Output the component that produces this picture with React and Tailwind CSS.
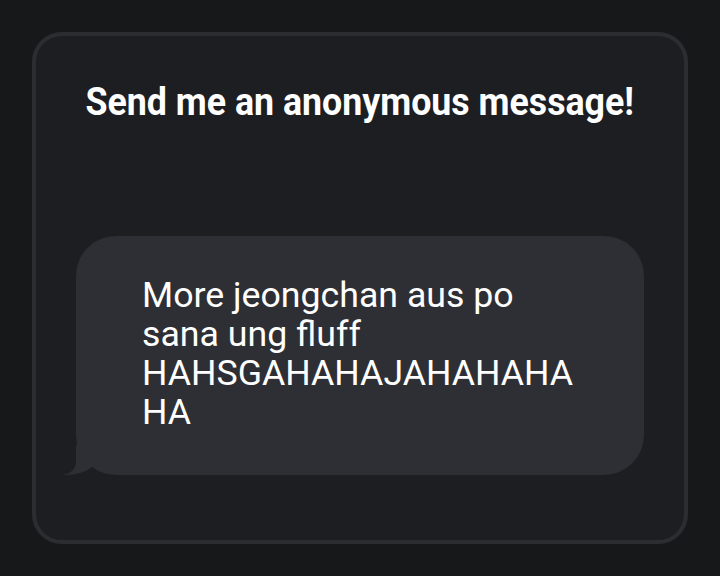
export default function App() {
  return (
    <div
      className="w-[720px] h-[576px] bg-[#17181a] p-8"
      style={{ fontFamily: 'Roboto, "Noto Sans", sans-serif' }}
    >
      <div className="h-full rounded-[30px] border-4 border-[#2c2d31] bg-[#1d1e22] flex flex-col items-center pt-[44px]">
        <h1 className="text-[38px] leading-[44px] font-bold text-white whitespace-nowrap scale-x-[0.94] origin-center">
          Send me an anonymous message!
        </h1>

        <div className="relative mt-[112px] w-[568px] rounded-[40px] bg-[#2e2f34] pl-[66px] pt-[40px] pb-[43px]">
          <p className="w-[442px] text-[35.7px] leading-[39px] text-white break-words">
            More jeongchan aus po sana ung fluff HAHSGAHAHAJAHAHAHAHA
          </p>
          <svg
            className="absolute left-[-14px] bottom-0"
            width="40"
            height="30"
            viewBox="0 0 40 30"
          >
            <path d="M14 0 L14 16 Q14 28 0 30 Q20 31 33 20 L33 0 Z" fill="#2e2f34" />
          </svg>
        </div>
      </div>
    </div>
  )
}
